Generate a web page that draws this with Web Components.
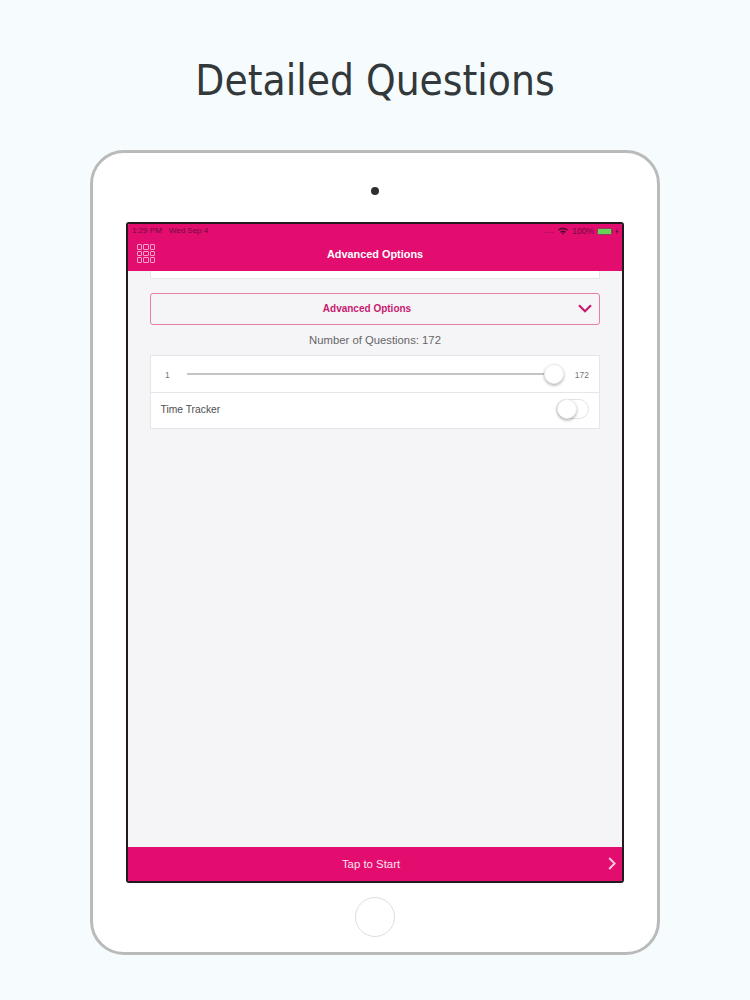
<!DOCTYPE html>
<html>
<head>
<meta charset="utf-8">
<title>Detailed Questions</title>
<style>
  html, body { margin: 0; padding: 0; }
  body { width: 750px; height: 1000px; overflow: hidden; background: #f6fbfd; font-family: "Liberation Sans", Arial, sans-serif; }
</style>
</head>
<body>
<promo-page heading="Detailed Questions">
  <status-bar time="1:29 PM" date="Wed Sep 4" battery="100%"></status-bar>
  <nav-bar>Advanced Options</nav-bar>
  <question-options count="172"></question-options>
  <start-bar>Tap to Start</start-bar>
</promo-page>

<script>
class PromoPage extends HTMLElement {
  connectedCallback() {
    const heading = this.getAttribute('heading') || '';
    this.attachShadow({ mode: 'open' }).innerHTML = `
      <style>
        :host { display: block; height: 1000px; padding-top: 56px; box-sizing: border-box; }
        h1 {
          margin: 0 0 38px;
          height: 56px;
          text-align: center;
          font: normal 42px/50px "DejaVu Sans Condensed", "DejaVu Sans", Verdana, sans-serif;
          font-stretch: condensed;
          color: #33383a;
        }
        .device {
          box-sizing: border-box;
          width: 570px;
          height: 805px;
          margin-left: 90px;
          padding-top: 34px;
          background: #fff;
          border: 3px solid #b9bbbb;
          border-radius: 34px;
          display: flex;
          flex-direction: column;
          align-items: center;
        }
        .camera { width: 8px; height: 8px; border-radius: 50%; background: #2d2f31; }
        .screen {
          box-sizing: border-box;
          width: 498px;
          height: 661px;
          margin-top: 27px;
          border: 2px solid #231a20;
          border-radius: 3px;
          background: #f5f5f8;
          display: flex;
          flex-direction: column;
          overflow: hidden;
        }
        .home {
          box-sizing: border-box;
          width: 40px;
          height: 40px;
          margin-top: 14px;
          border: 1px solid #dcdede;
          border-radius: 50%;
        }
      </style>
      <h1>${heading}</h1>
      <div class="device">
        <div class="camera"></div>
        <div class="screen"><slot></slot></div>
        <div class="home"></div>
      </div>`;
  }
}

class StatusBar extends HTMLElement {
  connectedCallback() {
    const a = (n) => this.getAttribute(n) || '';
    this.attachShadow({ mode: 'open' }).innerHTML = `
      <style>
        :host {
          display: flex; align-items: center; height: 14px; flex: none;
          padding: 0 3px 0 4px;
          background: #e30d6f;
          color: #700a40;
          font: 8px/14px "Liberation Sans", Arial, sans-serif;
        }
        .date { margin-left: 7px; }
        .right { margin-left: auto; display: flex; align-items: center; }
        .dots { letter-spacing: 0.4px; margin-right: 4px; font-size: 8px; line-height: 10px; }
        svg { display: block; }
        .pct { margin: 0 3px 0 4px; font-size: 8.5px; }
      </style>
      <span>${a('time')}</span><span class="date">${a('date')}</span>
      <span class="right">
        <span class="dots">....</span>
        <svg width="10" height="8" viewBox="0 0 10 8"><path d="M0 2.6C2.8 0 7.2 0 10 2.6L9 3.7C6.7 1.7 3.3 1.7 1 3.7z M2.1 4.7C3.8 3.2 6.2 3.2 7.9 4.7L6.9 5.8C5.8 4.9 4.2 4.9 3.1 5.8z M3.9 6.6C4.5 6.1 5.5 6.1 6.1 6.6L5 7.8z" fill="#4e0830"/></svg>
        <span class="pct">${a('battery')}</span>
        <svg width="22" height="7" viewBox="0 0 22 7"><rect x="0.4" y="0.4" width="14.2" height="6.2" rx="1.2" fill="#66d455" stroke="#8a2a60" stroke-width="0.8"/><rect x="15.2" y="2.4" width="1" height="2.2" fill="#8a2a60"/><path d="M20.6 0.6l-2.2 3.2h1.3l-.5 2.6 2.4-3.4h-1.4z" fill="#700a40"/></svg>
      </span>`;
  }
}

class NavBar extends HTMLElement {
  connectedCallback() {
    const cells = Array.from({ length: 9 }, () => '<i></i>').join('');
    this.attachShadow({ mode: 'open' }).innerHTML = `
      <style>
        :host {
          display: grid; grid-template-columns: 1fr auto 1fr; align-items: center;
          flex: none; height: 33px; padding: 0 9px; box-sizing: border-box;
          background: #e30d6f; color: #fff;
          font: bold 10.9px/14px "Liberation Sans", Arial, sans-serif;
        }
        .menu { display: grid; grid-template-columns: repeat(3, 5.4px); grid-auto-rows: 5.6px; gap: 1px; width: 18px; margin-bottom: 2px; }
        i { box-sizing: border-box; border: 1px solid #f7a3c9; border-radius: 1px; }
        .title { margin-bottom: 2px; }
      </style>
      <div class="menu">${cells}</div>
      <div class="title"><slot></slot></div>
      <div></div>`;
  }
}

class QuestionOptions extends HTMLElement {
  connectedCallback() {
    const count = this.getAttribute('count') || '0';
    this.attachShadow({ mode: 'open' }).innerHTML = `
      <style>
        :host { display: block; flex: 1; padding: 0 22px; background: #f5f5f8; }
        .sliver { height: 8px; background: #fff; border: 1px solid #e6e6ea; border-top: 0; box-sizing: border-box; }
        .select {
          box-sizing: border-box; height: 32px; margin-top: 14px; position: relative;
          display: flex; align-items: center; justify-content: center; padding-right: 16px;
          border: 1px solid #e57fa9; border-radius: 3px;
          color: #c9196e;
          font: bold 10px/14px "Liberation Sans", Arial, sans-serif;
        }
        .select svg { position: absolute; right: 7px; top: 10px; }
        .count {
          height: 30px; line-height: 31px; text-align: center;
          color: #666; font-size: 11.3px;
        }
        .card { background: #fff; border: 1px solid #e6e6ea; box-sizing: border-box; height: 74px; }
        .row { box-sizing: border-box; height: 36px; display: flex; align-items: center; }
        .row + .row { border-top: 1px solid #e6e6ea; }
        .limit { color: #77777b; font-size: 8.5px; padding-top: 1px; }
        .min { width: 36px; padding-left: 14px; box-sizing: border-box; }
        .track { flex: 1; height: 2px; margin-top: -1px; background: #c4c4c6; position: relative; }
        .knob {
          position: absolute; box-sizing: border-box; border-radius: 50%;
          background: #fff; border: 1px solid #ececec;
          box-shadow: 0 1.5px 3px rgba(0,0,0,.3);
        }
        .track .knob { width: 20px; height: 20px; right: -11px; top: -9px; }
        .max { width: 46px; padding-left: 10px; padding-right: 10px; box-sizing: border-box; text-align: right; }
        .label { padding: 0 0 2px 9.5px; color: #4e4e52; font-size: 10.3px; flex: 1; }
        .toggle {
          box-sizing: border-box; width: 33px; height: 20px; margin-right: 10px; margin-bottom: 3px;
          border: 1px solid #e4e4e6; border-radius: 10px; position: relative; background: #fff;
        }
        .toggle .knob { width: 20px; height: 20px; left: 0; top: -1px; }
      </style>
      <div class="sliver"></div>
      <div class="select">Advanced Options
        <svg width="14" height="9" viewBox="0 0 14 9"><path d="M1 1.2L7 7.2L13 1.2" fill="none" stroke="#c8196c" stroke-width="2.2"/></svg>
      </div>
      <div class="count">Number of Questions: ${count}</div>
      <div class="card">
        <div class="row">
          <span class="limit min">1</span>
          <div class="track"><div class="knob"></div></div>
          <span class="limit max">${count}</span>
        </div>
        <div class="row">
          <span class="label">Time Tracker</span>
          <div class="toggle"><div class="knob"></div></div>
        </div>
      </div>`;
  }
}

class StartBar extends HTMLElement {
  connectedCallback() {
    this.attachShadow({ mode: 'open' }).innerHTML = `
      <style>
        :host {
          display: flex; align-items: center; justify-content: center; position: relative;
          flex: none; height: 34px; padding-right: 8px;
          background: #e30d6f; color: #fde3ee;
          font: 11.4px/14px "Liberation Sans", Arial, sans-serif;
        }
        svg { position: absolute; right: 6px; top: 10px; }
      </style>
      <slot></slot>
      <svg width="8" height="13" viewBox="0 0 8 13"><path d="M1.2 1L6.6 6.5L1.2 12" fill="none" stroke="#f9c6dc" stroke-width="2"/></svg>`;
  }
}

customElements.define('promo-page', PromoPage);
customElements.define('status-bar', StatusBar);
customElements.define('nav-bar', NavBar);
customElements.define('question-options', QuestionOptions);
customElements.define('start-bar', StartBar);
</script>
</body>
</html>
